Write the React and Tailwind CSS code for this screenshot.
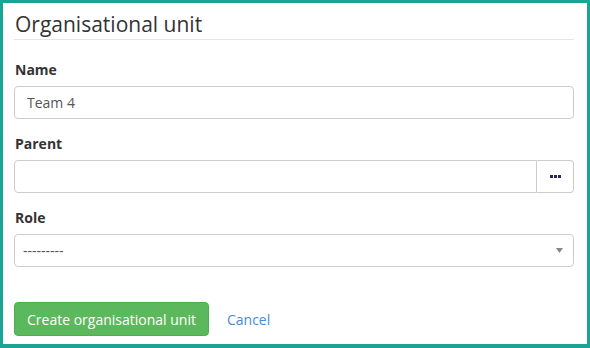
export default function App() {
  const font = { fontFamily: '"Open Sans", "Liberation Sans", sans-serif' }

  return (
    <div className="w-[590px] h-[348px] border-[3px] border-b-4 border-[#1ba393] bg-white pl-[11px] pr-[13px] text-[#333]" style={font}>
      {/* titel */}
      <h1 className="mt-[8px] pl-[1px] pb-[2px] text-[21px] leading-[26px] font-normal border-b border-[#e5e5e5]">
        Organisational unit
      </h1>

      <form className="mt-[20px]">
        <div className="mb-[15px]">
          <label className="block text-[14px] leading-[20px] font-bold pl-[1px] mb-[6px]">Name</label>
          <input
            className="block w-full h-[33px] px-[12px] text-[14px] text-[#555] border border-[#ccc] rounded-[4px] outline-none"
            defaultValue="Team 4"
          />
        </div>

        <div className="mb-[15px]">
          <label className="block text-[14px] leading-[20px] font-bold pl-[1px] mb-[6px]">Parent</label>
          <div className="flex h-[33px]">
            <input className="flex-1 min-w-0 px-[12px] text-[14px] border border-[#ccc] rounded-l-[4px] outline-none" />
            <button type="button" className="w-[37px] flex items-center justify-center gap-[1px] border border-l-0 border-[#ccc] rounded-r-[4px] bg-white">
              <span className="w-[3px] h-[3px] bg-[#2a2850]" />
              <span className="w-[3px] h-[3px] bg-[#2a2850]" />
              <span className="w-[3px] h-[3px] bg-[#2a2850]" />
            </button>
          </div>
        </div>

        <div>
          <label className="block text-[14px] leading-[20px] font-bold pl-[1px] mb-[6px]">Role</label>
          <div className="relative h-[33px] border border-[#ccc] rounded-[4px] flex items-center pl-[8px] text-[14px] text-[#555]">
            ---------
            <svg className="absolute right-[10px] top-[13px]" width="7" height="5" viewBox="0 0 7 5">
              <path d="M0 0h7L3.5 5z" fill="#888" />
            </svg>
          </div>
        </div>

        <div className="mt-[35px] flex items-center gap-[18px]">
          <button type="button" className="h-[34px] px-[12px] rounded-[4px] bg-[#5cb85c] border border-[#4cae4c] text-white text-[14px]">
            Create organisational unit
          </button>
          <a className="text-[14px] text-[#4a8ad0]">Cancel</a>
        </div>
      </form>
    </div>
  )
}
